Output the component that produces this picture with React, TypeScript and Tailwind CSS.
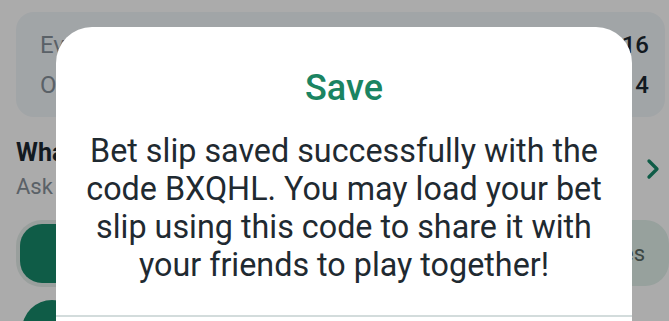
import { ChevronRight } from "lucide-react";

export default function App() {
  return (
    <div className="relative h-[321px] w-[669px] overflow-hidden bg-white font-['Roboto',sans-serif]">
      {/* page underneath */}
      <div className="ml-4 mr-1 mt-3 flex h-[105px] flex-col justify-center gap-[14px] rounded-[18px] bg-[#f1f6fa] pl-6 pr-4 text-[24px] leading-[26px]">
        <div className="flex justify-between">
          <span className="text-[#87919a]">Events</span>
          <span className="font-medium text-[#1c2830]">16</span>
        </div>
        <div className="flex justify-between">
          <span className="text-[#87919a]">Odds</span>
          <span className="font-medium text-[#1c2830]">4</span>
        </div>
      </div>
      <div className="mt-[21px] flex items-center justify-between pl-4">
        <div>
          <div className="text-[25px] font-bold leading-[30px] text-[#1c2830]">What is a code?</div>
          <div className="mt-[6px] text-[22px] leading-[26px] text-[#87919a]">Ask a friend</div>
        </div>
        <ChevronRight className="h-8 w-8 text-[#17896a]" strokeWidth={2.5} />
      </div>
      <div className="mt-[20px] flex gap-3 pl-4">
        <div className="h-[67px] w-[300px] rounded-[26px] bg-[#e4eeea] p-1">
          <div className="h-full w-full rounded-[22px] bg-[#17896a]" />
        </div>
        <div className="flex h-[66px] flex-1 items-center justify-end rounded-[24px] bg-[#e1f0eb] pr-6 text-[22px] text-[#5a6a66]">
          Codes
        </div>
      </div>
      <div className="ml-[22px] mt-[13px] h-[60px] w-[60px] rounded-full bg-[#17896a]" />

      {/* overlay */}
      <div className="absolute inset-0 bg-black/[0.33]" />

      {/* modal */}
      <div className="absolute left-[56px] top-[27px] flex h-[320px] w-[576px] flex-col rounded-t-[36px] bg-white">
        <div className="pt-[40px] text-center text-[36px] font-medium leading-[42px] text-[#1b8462]">Save</div>
        <p className="mt-[23px] px-6 text-center text-[32.3px] leading-[38px] text-[#1f2a31]">
          Bet slip saved successfully with the code BXQHL. You may load your bet slip using this code to share it with your friends to play together!
        </p>
        <div className="mt-[31px] flex-1 border-t-2 border-[#d3dcdc]" />
      </div>
    </div>
  );
}
